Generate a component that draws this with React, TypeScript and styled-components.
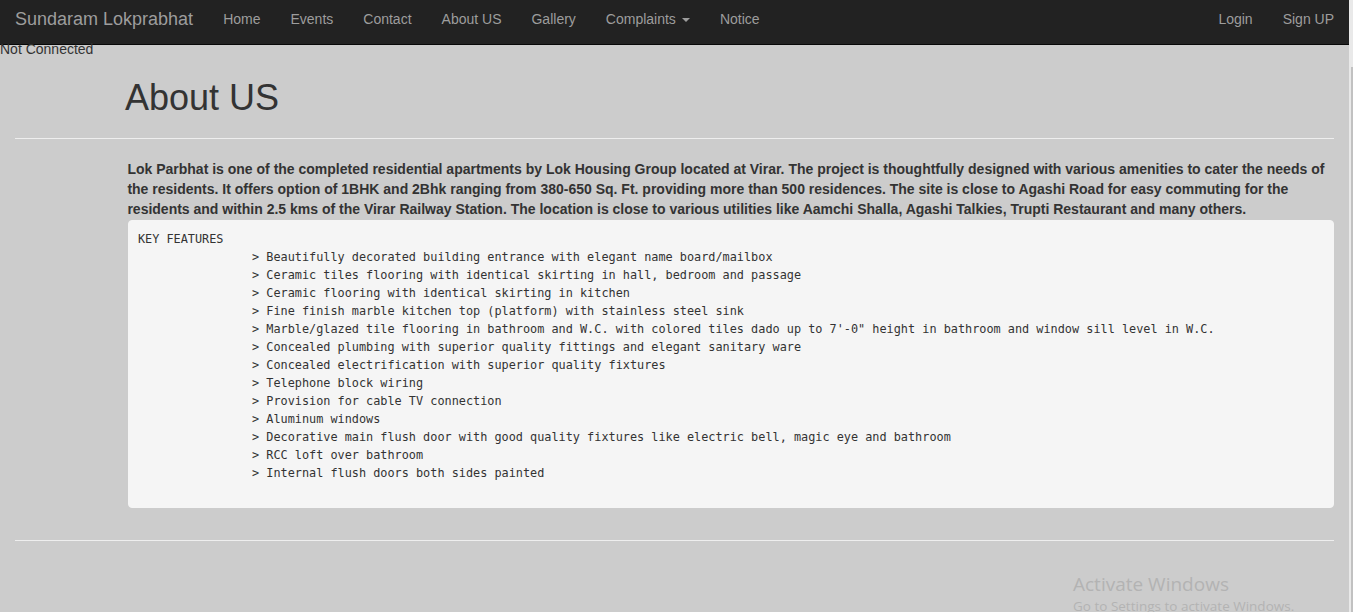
import styled, { createGlobalStyle } from "styled-components";

const GlobalStyle = createGlobalStyle`
  html, body {
    margin: 0;
    padding: 0;
    background: #cccccc;
  }
  body {
    font-family: "Liberation Sans", Arial, sans-serif;
    font-size: 14px;
    line-height: 20px;
    color: #333;
    overflow: hidden;
  }
  * {
    box-sizing: border-box;
  }
`;

const leftLinks = ["Home", "Events", "Contact", "About US", "Gallery", "Complaints", "Notice"];
const rightLinks = ["Login", "Sign UP"];

const features = [
  "Beautifully decorated building entrance with elegant name board/mailbox",
  "Ceramic tiles flooring with identical skirting in hall, bedroom and passage",
  "Ceramic flooring with identical skirting in kitchen",
  "Fine finish marble kitchen top (platform) with stainless steel sink",
  "Marble/glazed tile flooring in bathroom and W.C. with colored tiles dado up to 7'-0\" height in bathroom and window sill level in W.C.",
  "Concealed plumbing with superior quality fittings and elegant sanitary ware",
  "Concealed electrification with superior quality fixtures",
  "Telephone block wiring",
  "Provision for cable TV connection",
  "Aluminum windows",
  "Decorative main flush door with good quality fixtures like electric bell, magic eye and bathroom",
  "RCC loft over bathroom",
  "Internal flush doors both sides painted",
];

const App = () => {
  const featureText = "KEY FEATURES\n" + features.map((f) => "\t\t> " + f).join("\n");

  return (
    <Shell>
      <GlobalStyle />
      <Page>
        <NavBar>
          <Brand>Sundaram Lokprabhat</Brand>
          <NavList>
            {leftLinks.map((l) => (
              <NavLink key={l}>
                {l}
                {l === "Complaints" && <Caret />}
              </NavLink>
            ))}
          </NavList>
          <NavList $right>
            {rightLinks.map((l) => (
              <NavLink key={l}>{l}</NavLink>
            ))}
          </NavList>
        </NavBar>
        <Status>Not Connected</Status>
        <Container>
          <PageTitle>About US</PageTitle>
          <Rule />
          <Content>
            <Lead>
              Lok Parbhat is one of the completed residential apartments by Lok Housing Group located
              at Virar. The project is thoughtfully designed with various amenities to cater the needs
              of the residents. It offers option of 1BHK and 2Bhk ranging from 380-650 Sq. Ft.
              providing more than 500 residences. The site is close to Agashi Road for easy commuting
              for the residents and within 2.5 kms of the Virar Railway Station. The location is close
              to various utilities like Aamchi Shalla, Agashi Talkies, Trupti Restaurant and many
              others.
            </Lead>
            <Features>{featureText}</Features>
          </Content>
          <Rule />
        </Container>
      </Page>
      <ScrollTrack>
        <ScrollThumb />
      </ScrollTrack>
      <Watermark>
        <WatermarkTitle>Activate Windows</WatermarkTitle>
        <WatermarkNote>Go to Settings to activate Windows.</WatermarkNote>
      </Watermark>
    </Shell>
  );
};

export default App;

const Shell = styled.div`
  position: relative;
  display: flex;
  width: 1353px;
  height: 612px;
  overflow: hidden;
`;

const Page = styled.div`
  flex: 1;
  min-width: 0;
  background: #cccccc;
`;

const NavBar = styled.nav`
  display: flex;
  align-items: flex-start;
  height: 45px;
  background: #222222;
  border-bottom: 1px solid #080808;
`;

const Brand = styled.a`
  padding: 8px 15px;
  font-size: 18px;
  line-height: 22px;
  color: #9d9d9d;
  cursor: pointer;
`;

const NavList = styled.ul<{ $right?: boolean }>`
  display: flex;
  margin: 0;
  padding: 0;
  list-style: none;
  margin-left: ${(p) => (p.$right ? "auto" : "0")};
`;

const NavLink = styled.li`
  padding: 9px 15px;
  font-size: 14px;
  line-height: 20px;
  color: #9d9d9d;
  cursor: pointer;
`;

const Caret = styled.span`
  display: inline-block;
  width: 0;
  height: 0;
  margin-left: 6px;
  vertical-align: middle;
  border-top: 4px solid #9d9d9d;
  border-left: 4px solid transparent;
  border-right: 4px solid transparent;
`;

const Status = styled.div`
  margin-top: -6px;
  line-height: 20px;
  font-size: 14px;
  color: #333;
`;

const Container = styled.div`
  padding: 0 15px;
`;

const PageTitle = styled.h1`
  margin: 19px 0 10px 110px;
  font-size: 36px;
  font-weight: 500;
  line-height: 39.6px;
  color: #333;
`;

const Rule = styled.hr`
  margin: 20px 0;
  border: 0;
  border-top: 1px solid #eeeeee;
`;

const Content = styled.div`
  padding: 0 0 12px 112.4px;
`;

const Lead = styled.p`
  margin: 0 0 1px;
  font-size: 14px;
  font-weight: bold;
  line-height: 20px;
  color: #333;
`;

const Features = styled.pre`
  margin: 0 0 0 1px;
  padding: 9.5px 9.5px 24.5px 8.5px;
  font-family: "DejaVu Sans Mono", "Liberation Mono", monospace;
  font-size: 11.85px;
  line-height: 18px;
  color: #333;
  background: #f5f5f5;
  border: 1px solid #f5f5f5;
  border-radius: 4px;
  tab-size: 8;
  white-space: pre;
  overflow: hidden;
`;

const ScrollTrack = styled.div`
  display: flex;
  justify-content: flex-end;
  width: 4px;
  padding-top: 67px;
  background: #e9e9e9;
`;

const ScrollThumb = styled.div`
  width: 2px;
  height: 560px;
  background: #c1c1c1;
`;

const Watermark = styled.div`
  position: absolute;
  left: 1073px;
  top: 571px;
  font-family: "Open Sans", "Noto Sans", sans-serif;
  color: #b3b3b3;
  pointer-events: none;
`;

const WatermarkTitle = styled.div`
  font-size: 19px;
  line-height: 26px;
`;

const WatermarkNote = styled.div`
  font-size: 13.5px;
  line-height: 18px;
`;
